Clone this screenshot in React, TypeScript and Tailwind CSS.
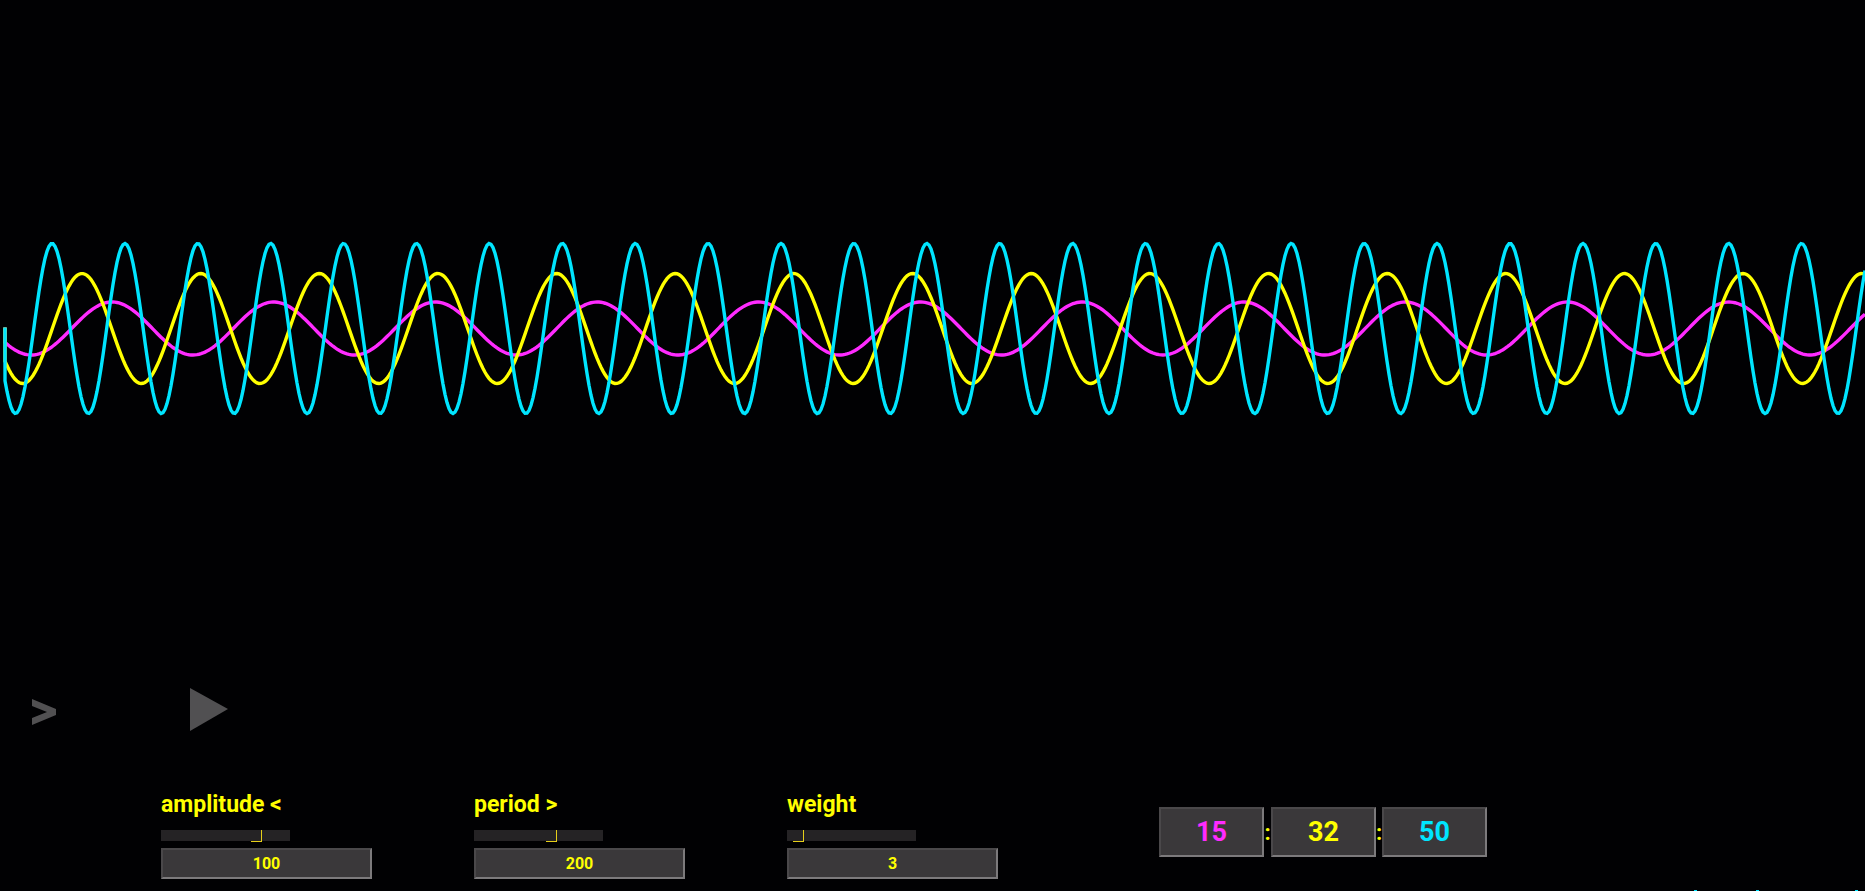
import React from "react";

const font = { fontFamily: "Roboto, sans-serif" };

// one wave of the oscilloscope, drawn from its first peak and period
function wavePath(amp: number, period: number, peak: number) {
  const mid = 328.5;
  let d = `M5 327.5`;
  for (let x = 5; x <= 1865; x += 2) {
    const y = mid - amp * Math.cos(((x - peak) / period) * Math.PI * 2);
    d += ` L${x} ${y.toFixed(2)}`;
  }
  return d;
}

const waves = [
  { color: "#ff2bff", d: wavePath(26.5, 161.7, 112) },
  { color: "#ffff00", d: wavePath(55, 118.65, 82) },
  { color: "#00e5ff", d: wavePath(85, 72.9, 52) },
];

function Control({ label, value, knob }: { label: string; value: string; knob: number }) {
  return (
    <div className="flex w-[211px] flex-col">
      <div className="h-[24px] text-[23px] leading-[24px] font-bold text-[#ffff00]">{label}</div>
      <div className="mt-[13px] relative h-[11px] w-[129px] bg-[#252325]">
        <div
          className="absolute top-0 h-[12px] w-[11px] border-r border-b border-[#e6cf1a]"
          style={{ left: knob }}
        />
      </div>
      <div className="mt-[7px] flex h-[31px] items-center justify-center border-2 border-t-[#4a484a] border-l-[#4a484a] border-r-[#7c7a7c] border-b-[#7c7a7c] bg-[#3a383a] text-[16px] font-bold text-[#ffff00]">
        {value}
      </div>
    </div>
  );
}

function ClockBox({ value, color }: { value: string; color: string }) {
  return (
    <div
      className="flex h-[50px] w-[105px] items-center justify-center border-2 border-t-[#4a484a] border-l-[#4a484a] border-r-[#7c7a7c] border-b-[#7c7a7c] bg-[#3a383a] text-[27px] font-bold"
      style={{ color }}
    >
      {value}
    </div>
  );
}

export default function App() {
  return (
    <div className="flex h-[891px] w-full flex-col overflow-hidden bg-[#010103]" style={font}>
      <svg className="h-[670px] w-full shrink-0" viewBox="0 0 1865 670" fill="none">
        {waves.map((w) => (
          <path key={w.color} d={w.d} stroke={w.color} strokeWidth={3.4} />
        ))}
      </svg>

      <div className="flex h-[70px] items-start pl-[30px] pt-[18px]">
        <svg width="28" height="28" viewBox="0 0 28 28" className="mt-[11px]">
          <path d="M2 0 L26 10 L26 16 L2 26 L2 19 L17 13 L2 7 Z" fill="#515052" />
        </svg>
        <svg width="38" height="44" viewBox="0 0 38 44" className="ml-[132px]">
          <path d="M0 0 L38 21 L0 43 Z" fill="#515052" />
        </svg>
      </div>

      <div className="flex items-start pl-[161px] pt-[53px]">
        <div className="flex gap-[102px]">
          <Control label="amplitude <" value="100" knob={90} />
          <Control label="period >" value="200" knob={72} />
          <Control label="weight" value="3" knob={6} />
        </div>
        <div className="ml-[161px] mt-[14px] flex items-center text-[22px] font-bold text-[#ffff00]">
          <ClockBox value="15" color="#ff2bff" />
          <span className="w-[7px] text-center">:</span>
          <ClockBox value="32" color="#ffff00" />
          <span className="w-[6px] text-center">:</span>
          <ClockBox value="50" color="#00e5ff" />
        </div>
      </div>

      {/* tips of something cut off by the bottom of the window */}
      <div className="mt-auto flex h-[1px] pl-[1694px]">
        <div className="h-[1px] w-[3px] bg-[#00e5ff]" />
        <div className="ml-[59px] h-[1px] w-[3px] bg-[#00e5ff]" />
        <div className="ml-[96px] h-[1px] w-[3px] bg-[#00e5ff]" />
      </div>
    </div>
  );
}
